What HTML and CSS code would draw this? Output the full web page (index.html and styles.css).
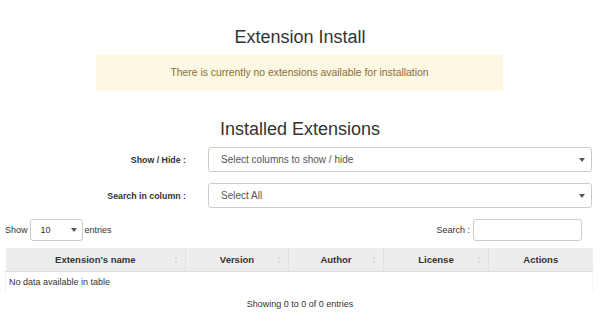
FILE: index.html
```html
<!DOCTYPE html>
<html lang="en">
<head>
  <meta charset="UTF-8" />
  <title>Extensions</title>
  <link rel="stylesheet" href="styles.css">
</head>
<body>
  <div class="page">
    <h2 class="title">Extension Install</h2>
    <div class="alert">There is currently no extensions available for installation</div>

    <h2 class="title title-second">Installed Extensions</h2>

    <div class="form-row">
      <label>Show / Hide :</label>
      <div class="select">
        <span>Select columns to show / hide</span>
        <svg class="caret" width="6" height="4" viewBox="0 0 6 4"><path d="M0 0h6L3 4z" fill="#555"/></svg>
      </div>
    </div>
    <div class="form-row">
      <label>Search in column :</label>
      <div class="select">
        <span>Select All</span>
        <svg class="caret" width="6" height="4" viewBox="0 0 6 4"><path d="M0 0h6L3 4z" fill="#555"/></svg>
      </div>
    </div>

    <div class="table-tools">
      <div class="length">
        Show
        <div class="select select-small">
          <span>10</span>
          <svg class="caret" width="6" height="4" viewBox="0 0 6 4"><path d="M0 0h6L3 4z" fill="#555"/></svg>
        </div>
        entries
      </div>
      <div class="filter">
        Search :
        <input type="text" class="search-input">
      </div>
    </div>

    <table class="data">
      <colgroup>
        <col class="col-name">
        <col class="col-version">
        <col class="col-author">
        <col class="col-license">
        <col class="col-actions">
      </colgroup>
      <thead>
        <tr>
          <th>Extension's name <span class="sort"></span></th>
          <th>Version <span class="sort"></span></th>
          <th>Author <span class="sort"></span></th>
          <th>License <span class="sort"></span></th>
          <th>Actions</th>
        </tr>
      </thead>
      <tbody>
        <tr>
          <td colspan="5">No data available in table</td>
        </tr>
      </tbody>
    </table>

    <div class="info">Showing 0 to 0 of 0 entries</div>
  </div>
</body>
</html>
```

FILE: styles.css
```css
body {
  margin: 0;
  font-family: "Liberation Sans", Arial, sans-serif;
  color: #333;
  background: #fff;
}
.page {
  width: 600px;
  padding-top: 26px;
}
.title {
  margin: 0;
  text-align: center;
  font-size: 18px;
  font-weight: normal;
  line-height: 22px;
  color: #333;
}
.title-second {
  margin-top: 27px;
}
.alert {
  width: 407px;
  height: 36px;
  margin: 7px auto 0 96px;
  box-sizing: border-box;
  background: #fcf8e3;
  color: #8a6d3b;
  font-size: 10.4px;
  line-height: 36px;
  text-align: center;
}
.form-row {
  display: grid;
  grid-template-columns: 186px 1fr;
  column-gap: 22px;
  align-items: center;
  padding-right: 8px;
  margin-top: 11px;
}
.title-second + .form-row {
  margin-top: 7px;
}
.form-row label {
  text-align: right;
  font-size: 8.8px;
  font-weight: bold;
  color: #333;
}
.select {
  height: 25px;
  box-sizing: border-box;
  border: 1px solid #ccc;
  border-radius: 3px;
  display: flex;
  align-items: center;
  justify-content: space-between;
  padding: 0 6px 0 12px;
  font-size: 10px;
  color: #555;
  background: #fff;
}
.caret {
  display: block;
}
.table-tools {
  display: flex;
  justify-content: space-between;
  align-items: center;
  margin-top: 11px;
  padding: 0 18px 0 5px;
  font-size: 9px;
  color: #333;
}
.length, .filter {
  display: flex;
  align-items: center;
  gap: 3px;
}
.length {
  gap: 2px;
}
.select-small {
  width: 53px;
  height: 22px;
  padding: 0 5px 0 10px;
  border-radius: 3px;
  font-size: 9px;
  color: #333;
}
.search-input {
  width: 109px;
  height: 22px;
  box-sizing: border-box;
  border: 1px solid #ccc;
  border-radius: 3px;
  margin: 0;
  padding: 0 6px;
}
table.data {
  width: 587px;
  margin: 7px 0 0 5px;
  border-collapse: collapse;
  table-layout: fixed;
  font-size: 9px;
}
.col-name { width: 180px; }
.col-version { width: 103px; }
.col-author { width: 95px; }
.col-license { width: 105px; }
.col-actions { width: 104px; }
table.data th {
  position: relative;
  height: 23px;
  padding: 0;
  background: #ededed;
  border-left: 1px solid #e0e0e0;
  border-bottom: 1px solid #ddd;
  font-size: 9.5px;
  font-weight: bold;
  text-align: center;
  color: #333;
}
table.data th:first-child {
  border-left: none;
}
.sort {
  position: absolute;
  right: 6px;
  top: 8px;
  width: 5px;
  height: 8px;
}
.sort::before, .sort::after {
  content: "";
  position: absolute;
  left: 0;
  border-left: 2.5px solid transparent;
  border-right: 2.5px solid transparent;
}
.sort::before {
  top: 0;
  border-bottom: 3px solid #ddd;
}
.sort::after {
  bottom: 0;
  border-top: 3px solid #ddd;
}
table.data td {
  height: 19px;
  padding: 0 3px;
  border-left: 1px solid #eee;
  border-right: 1px solid #f4f4f4;
  color: #333;
}
.info {
  margin-top: 8px;
  text-align: center;
  font-size: 9px;
  color: #333;
}
```
